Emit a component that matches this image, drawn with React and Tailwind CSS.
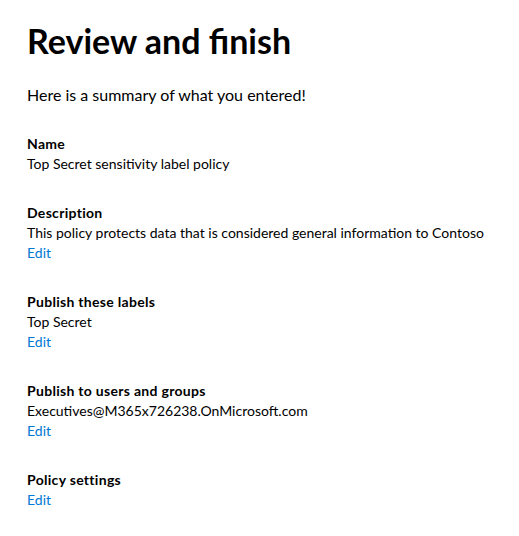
const sections = [
  { title: 'Name', lines: ['Top Secret sensitivity label policy'], edit: false },
  { title: 'Description', lines: ['This policy protects data that is considered general information to Contoso'], edit: true },
  { title: 'Publish these labels', lines: ['Top Secret'], edit: true },
  { title: 'Publish to users and groups', lines: ['Executives@M365x726238.OnMicrosoft.com'], edit: true },
  { title: 'Policy settings', lines: [], edit: true },
];

export default function App() {
  return (
    <div className="min-h-[536px] bg-white text-black pl-[27px]" style={{ fontFamily: 'Lato, sans-serif' }}>
      <h1 className="pt-[21px] text-[34px] font-bold leading-[40px]">Review and finish</h1>
      <p className="mt-[23px] text-[16px] leading-[22px]">Here is a summary of what you entered!</p>
      <div className="mt-[28px] flex flex-col gap-[29px]">
        {sections.map((s) => (
          <div key={s.title} className="flex flex-col text-[14px] leading-[20px]">
            <div className="font-bold tracking-[0.3px]">{s.title}</div>
            {s.lines.map((l) => (
              <div key={l}>{l}</div>
            ))}
            {s.edit && (
              <a href="#" className="text-[#0078d4] w-fit">Edit</a>
            )}
          </div>
        ))}
      </div>
    </div>
  );
}
